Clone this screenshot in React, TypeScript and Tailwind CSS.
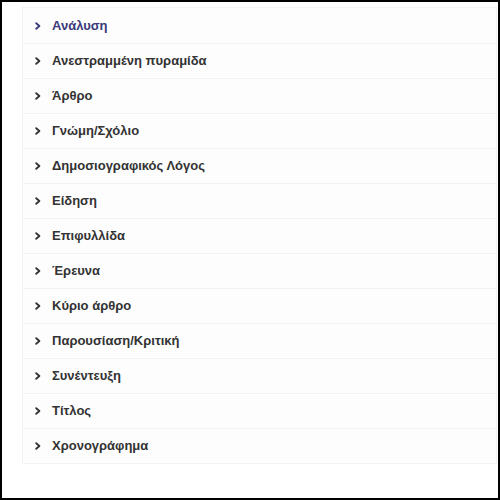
import type { JSX } from 'react'

const GENRES = [
  'Ανάλυση',
  'Ανεστραμμένη πυραμίδα',
  'Άρθρο',
  'Γνώμη/Σχόλιο',
  'Δημοσιογραφικός Λόγος',
  'Είδηση',
  'Επιφυλλίδα',
  'Έρευνα',
  'Κύριο άρθρο',
  'Παρουσίαση/Κριτική',
  'Συνέντευξη',
  'Τίτλος',
  'Χρονογράφημα',
]

function Chevron(): JSX.Element {
  return (
    <svg width="6" height="8" viewBox="0 0 6 8" fill="none" className="shrink-0">
      <path d="M1.2 1.2 L4.4 4 L1.2 6.8" stroke="currentColor" strokeWidth="1.8" strokeLinecap="round" strokeLinejoin="round" />
    </svg>
  )
}

export default function App(): JSX.Element {
  return (
    <div className="h-[500px] w-[500px] border-2 border-black bg-white pl-[20px] pr-[1px] pt-[5px] font-['Liberation_Sans',Arial,sans-serif]">
      <ul className="border border-[#f4f4f4] bg-[#fdfdfd]">
        {GENRES.map((g, i) => (
          <li
            key={g}
            className={`flex h-[35px] items-center gap-[11px] pl-[12px] text-[13px] font-bold ${
              i > 0 ? 'border-t border-[#f2f2f2]' : ''
            } ${i === 0 ? 'text-[#3b3a78]' : 'text-[#333333]'}`}
          >
            <Chevron />
            <span>{g}</span>
          </li>
        ))}
      </ul>
    </div>
  )
}
